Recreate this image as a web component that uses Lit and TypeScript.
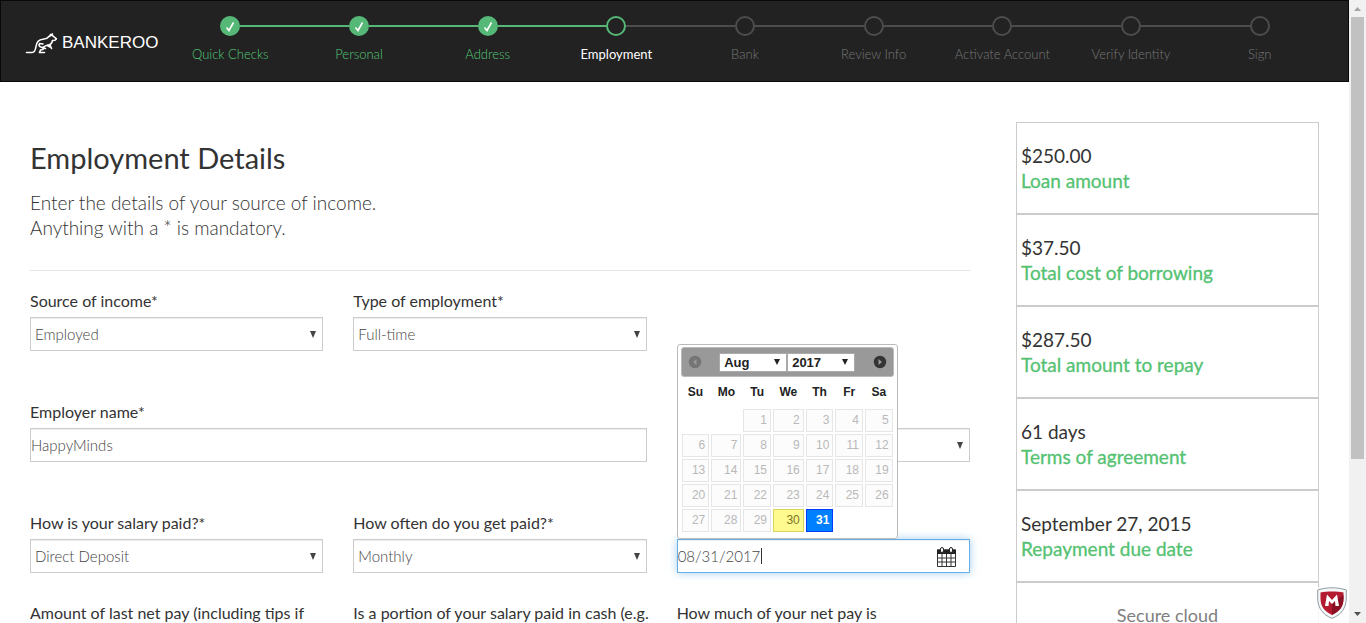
import { LitElement, html, css, svg } from "lit";
import { customElement, property, state } from "lit/decorators.js";
import { classMap } from "lit/directives/class-map.js";

const STEPS = [
  "Quick Checks",
  "Personal",
  "Address",
  "Employment",
  "Bank",
  "Review Info",
  "Activate Account",
  "Verify Identity",
  "Sign",
];

const SUMMARY = [
  ["$250.00", "Loan amount"],
  ["$37.50", "Total cost of borrowing"],
  ["$287.50", "Total amount to repay"],
  ["61 days", "Terms of agreement"],
  ["September 27, 2015", "Repayment due date"],
];

@customElement("step-header")
class StepHeader extends LitElement {
  @property({ type: Number }) current = 0;

  static styles = css`
    :host {
      display: block;
    }
    .bar {
      display: flex;
      align-items: flex-start;
      box-sizing: border-box;
      height: 82px;
      padding: 0 24px;
      background: #222;
      border: 1px solid #080808;
    }
    .brand {
      display: flex;
      align-items: center;
      gap: 5px;
      flex: 0 0 141px;
      margin-top: 30px;
      color: #fff;
      font: 17px/24px "Liberation Sans", Arial, sans-serif;
      text-decoration: none;
    }
    .brand svg {
      flex: none;
    }
    .steps {
      display: grid;
      grid-template-columns: repeat(9, 1fr);
      flex: 1;
      margin: 15px 0 0;
      padding: 0;
      list-style: none;
    }
    .step {
      display: flex;
      flex-direction: column;
      gap: 8px;
      color: #777;
      font-weight: 300;
      font-size: 13px;
      line-height: 20px;
      text-align: center;
    }
    .track {
      display: flex;
      align-items: center;
    }
    .line {
      flex: 1;
      height: 2px;
      background: #4d4d4d;
    }
    .dot {
      box-sizing: border-box;
      width: 20px;
      height: 20px;
      border: 2px solid #4d4d4d;
      border-radius: 50%;
    }
    .dot svg {
      display: block;
    }
    .done {
      color: #52c878;
    }
    .now {
      color: #fff;
      font-weight: 400;
    }
    .line.on {
      background: #56b877;
    }
    .line.none {
      background: none;
    }
    .done .dot {
      background: #56b877;
      border-color: #56b877;
    }
    .now .dot {
      border-color: #56b877;
    }
  `;

  render() {
    return html`<header class="bar">
      <a class="brand" href="#">
        <svg width="32" height="21" viewBox="0 0 32 21" fill="none" stroke="#fff" stroke-width="1.6" stroke-linecap="round" stroke-linejoin="round">
          <path d="M1.500 19.500H7C10 19.500 10.500 17 11 13.500C11.600 8.500 14 6.500 18 6.200C21 6 22.500 5.500 24 3.500L27.500 1"/>
          <path d="M25.500 1.500L28 3L31.500 6L30 7.200L27.500 7.500C27 10 26 11.500 23.500 12C21.500 12.500 19 13 18 15L20.500 15.500"/>
          <path d="M14.500 10.500L18 11M14 11.500C14 14 16 14.500 18.500 14.500C20 15.500 18 16.500 15.500 17L14.500 19.500H19.500M25 12L26.500 15.500M22.500 12.500L25 14"/>
        </svg>
        BANKEROO
      </a>
      <ol class="steps">
        ${STEPS.map((label, i) => {
          const done = i < this.current;
          const now = i === this.current;
          return html`<li class=${classMap({ step: true, done, now })}>
            <span class="track">
              <span class=${classMap({ line: true, none: i === 0, on: done || now })}></span>
              <span class="dot">
                ${done
                  ? html`<svg width="16" height="16" viewBox="0 0 16 16" fill="none" stroke="#fff" stroke-width="1.6"><path d="M4.500 9.500L7 12.500L11.500 4.500" /></svg>`
                  : ""}
              </span>
              <span class=${classMap({ line: true, on: done, none: i === STEPS.length - 1 })}></span>
            </span>
            <span>${label}</span>
          </li>`;
        })}
      </ol>
    </header>`;
  }
}

@customElement("date-picker")
class DatePicker extends LitElement {
  @state() private today = 30;
  @state() private selected = 31;

  static styles = css`
    :host {
      display: block;
      box-sizing: border-box;
      width: 221px;
      padding: 2px 3px 5px;
      background: #fff;
      border: 1px solid #bbb;
      border-radius: 3px;
      color: #222;
      font: 12px/15px "Liberation Sans", Arial, sans-serif;
    }
    .head {
      display: flex;
      align-items: center;
      justify-content: space-between;
      box-sizing: border-box;
      height: 30px;
      padding: 0 6px;
      background: #999;
      border: 1px solid #bbb;
      border-radius: 3px;
    }
    .nav {
      display: flex;
      padding: 0;
      background: none;
      border: 0;
    }
    .nav:disabled {
      opacity: 0.35;
    }
    .pickers {
      display: flex;
    }
    .pick {
      appearance: none;
      box-sizing: border-box;
      width: 68px;
      height: 19px;
      padding: 0 4px;
      border: 1px solid #aaa;
      border-radius: 0;
      background: #fff
        url("data:image/svg+xml,%3Csvg xmlns='http://www.w3.org/2000/svg' width='6' height='6'%3E%3Cpath d='M0 0h6L3 6z' fill='%23222'/%3E%3C/svg%3E")
        no-repeat right 6px center;
      color: #222;
      font: bold 13px/15px "Liberation Sans", Arial, sans-serif;
    }
    .days {
      width: 100%;
      border-collapse: collapse;
    }
    .days th {
      height: 15px;
      padding: 8px 4px;
      font-weight: bold;
    }
    .days td {
      padding: 1px;
    }
    .day {
      display: block;
      box-sizing: border-box;
      width: 100%;
      height: 23px;
      padding: 0 3px;
      background: #fcfcfc;
      border: 1px solid #e6e6e6;
      color: #b9b9b9;
      font: 12px/15px "Liberation Sans", Arial, sans-serif;
      text-align: right;
    }
    .today {
      background: #fffa90;
      border-color: #dad55e;
      color: #777620;
    }
    .selected {
      background: #007fff;
      border-color: #003eff;
      color: #fff;
      font-weight: bold;
    }
  `;

  private arrow(d: string) {
    return html`<svg width="14" height="14" viewBox="0 0 14 14"><circle cx="7" cy="7" r="6.200" fill="#333" />${svg`<path d=${d} fill="#999" />`}</svg>`;
  }

  render() {
    const weeks = [0, 1, 2, 3, 4].map((w) => [0, 1, 2, 3, 4, 5, 6].map((d) => w * 7 + d - 1));
    return html`
      <div class="head">
        <button class="nav" aria-label="Previous month" disabled>${this.arrow("M8.500 4V10L5 7Z")}</button>
        <div class="pickers">
          <select class="pick" aria-label="Month"><option>Aug</option></select>
          <select class="pick" aria-label="Year"><option>2017</option></select>
        </div>
        <button class="nav" aria-label="Next month">${this.arrow("M5.500 4V10L9 7Z")}</button>
      </div>
      <table class="days">
        <thead>
          <tr>${["Su", "Mo", "Tu", "We", "Th", "Fr", "Sa"].map((d) => html`<th>${d}</th>`)}</tr>
        </thead>
        <tbody>
          ${weeks.map(
            (week) => html`<tr>
              ${week.map((n) =>
                n < 1 || n > 31
                  ? html`<td></td>`
                  : html`<td>
                      <button
                        class=${classMap({ day: true, today: n === this.today, selected: n === this.selected })}
                        ?disabled=${n < this.today}
                        @click=${() => (this.selected = n)}
                      >${n}</button>
                    </td>`
              )}
            </tr>`
          )}
        </tbody>
      </table>
    `;
  }
}

@customElement("app-root")
class AppRoot extends LitElement {
  static styles = css`
    :host {
      display: grid;
      grid-template-columns: minmax(0, 1fr) 17px;
      height: 100vh;
      overflow: hidden;
      background: #fff;
      color: #333;
      font-family: Lato, "Open Sans", sans-serif;
    }
    .page {
      min-width: 0;
      height: 100vh;
      overflow: hidden;
    }
    .content {
      display: grid;
      grid-template-columns: minmax(0, 1fr) 303px;
      gap: 46px;
      align-items: start;
      padding: 40px 30px 0;
    }
    .title {
      margin: 16px 0 12px;
      font-size: 29px;
      font-weight: 400;
      line-height: 40px;
    }
    .intro {
      margin: 0 0 30px;
      font-size: 19px;
      font-weight: 300;
      line-height: 25px;
    }
    .form {
      display: grid;
      grid-template-columns: repeat(3, minmax(0, 1fr));
      gap: 49px 30px;
      padding-top: 18px;
      border-top: 1px solid #e5e5e5;
    }
    .form.more {
      padding-top: 28px;
      border-top: 0;
    }
    .field {
      display: flex;
      flex-direction: column;
      justify-content: flex-end;
      gap: 4px;
    }
    .field.wide {
      grid-column: span 2;
    }
    .label {
      font-size: 16px;
      line-height: 24px;
      white-space: nowrap;
    }
    .control {
      appearance: none;
      box-sizing: border-box;
      width: 100%;
      height: 34px;
      padding: 0;
      background: #fff;
      border: 1px solid #ccc;
      border-radius: 0;
      box-shadow: inset 0 1px 1px rgba(0, 0, 0, 0.075);
      color: #444;
      font: 300 15px/20px Lato, "Open Sans", sans-serif;
    }
    .select {
      padding: 0 4px;
      background: #fff
        url("data:image/svg+xml,%3Csvg xmlns='http://www.w3.org/2000/svg' width='6' height='7'%3E%3Cpath d='M0 0h6L3 7z' fill='%23444'/%3E%3C/svg%3E")
        no-repeat right 6px center;
    }
    .dated {
      position: relative;
    }
    .active {
      background: linear-gradient(#333, #333) 83px 8px / 1px 16px no-repeat #fff;
      border-color: #66afe9;
      box-shadow: inset 0 1px 1px rgba(0, 0, 0, 0.075), 0 0 8px rgba(102, 175, 233, 0.6);
    }
    .calendar {
      position: absolute;
      top: 8px;
      right: 14px;
      display: flex;
      padding: 0;
      background: none;
      border: 0;
    }
    .popup {
      position: absolute;
      left: 0;
      bottom: 100%;
      z-index: 2;
    }
    .summary {
      margin: 0;
    }
    .item {
      padding: 20px 4px;
      border: 1px solid #ccc;
      font-size: 19px;
      line-height: 25px;
    }
    .item dd {
      margin: 0;
    }
    .name {
      color: #54c272;
      -webkit-text-stroke: 0.3px #54c272;
    }
    .secure {
      color: #808080;
      font-size: 18px;
      text-align: center;
    }
    .badge {
      position: fixed;
      right: 18px;
      bottom: 0;
      display: flex;
      padding: 0 1px 4px 0;
      background: rgba(255, 255, 255, 0.8);
      border: 0;
    }
    .scroll {
      display: flex;
      flex-direction: column;
      align-items: center;
      justify-content: space-between;
      box-sizing: border-box;
      height: 100vh;
      background: #f1f1f1;
    }
    .arrow {
      display: block;
      height: 17px;
    }
    .rail {
      flex: 1;
      width: 13px;
    }
    .thumb {
      height: 75%;
      background: #c1c1c1;
    }
  `;

  private choice(id: string, label: string, value: string) {
    return html`<div class="field">
      <label class="label" for=${id}>${label}</label>
      <select class="control select" id=${id}><option>${value}</option></select>
    </div>`;
  }

  private text(id: string, label: string, value: string, wide = false) {
    return html`<div class=${classMap({ field: true, wide })}>
      <label class="label" for=${id}>${label}</label>
      <input class="control" id=${id} .value=${value} />
    </div>`;
  }

  render() {
    return html`
      <div class="page">
        <step-header .current=${3}></step-header>
        <div class="content">
          <main>
            <h1 class="title">Employment Details</h1>
            <p class="intro">Enter the details of your source of income.<br />Anything with a * is mandatory.</p>
            <form>
              <div class="form">
                ${this.choice("source", "Source of income*", "Employed")}
                ${this.choice("type", "Type of employment*", "Full-time")}
                <span></span>
                ${this.text("employer", "Employer name*", "HappyMinds", true)}
                <div class="field">
                  <select class="control select" aria-label="Time employed"><option></option></select>
                </div>
                ${this.choice("paid", "How is your salary paid?*", "Direct Deposit")}
                ${this.choice("often", "How often do you get paid?*", "Monthly")}
                <div class="field">
                  <div class="dated">
                    <input class="control active" aria-label="Next pay date" .value=${"08/31/2017"} />
                    <button class="calendar" type="button" aria-label="Choose a date">
                      <svg width="19" height="20" viewBox="0 0 19 20">
                        <path d="M0.500 3H18.500V19.500H0.500Z" fill="#fff" stroke="#333" />
                        <path d="M0 2.500H19V7H0Z" fill="#222" />
                        <path d="M1 11H18M1 15H18M5 7V19M9.500 7V19M14 7V19" stroke="#333" fill="none" />
                        <rect x="3.500" y="0.500" width="3" height="5" rx="1.500" fill="#fff" stroke="#222" />
                        <rect x="12.500" y="0.500" width="3" height="5" rx="1.500" fill="#fff" stroke="#222" />
                      </svg>
                    </button>
                    <date-picker class="popup"></date-picker>
                  </div>
                </div>
              </div>
              <div class="form more">
                ${this.text("net", "Amount of last net pay (including tips if", "")}
                ${this.text("cash", "Is a portion of your salary paid in cash (e.g.", "")}
                ${this.text("share", "How much of your net pay is", "")}
              </div>
            </form>
          </main>
          <aside>
            <dl class="summary">
              ${SUMMARY.map(
                ([value, name]) => html`<div class="item">
                  <dd>${value}</dd>
                  <dt class="name">${name}</dt>
                </div>`
              )}
            </dl>
            <div class="item secure">Secure cloud</div>
          </aside>
        </div>
      </div>
      <button class="badge" aria-label="McAfee Secure">
        <svg width="30" height="32" viewBox="0 0 30 32">
          <path d="M15 0.800C19.500 0.800 25 1.500 29.300 3V11C29.300 21 24 28 15 31.300C6 28 0.700 21 0.700 11V3C5 1.500 10.500 0.800 15 0.800Z" fill="#f4f6f7" stroke="#8f9ca3" />
          <path d="M15 4.500C19 4.500 23 4.800 26.500 5.600V11.500C26.500 19.500 22.500 24.500 15 28C7.500 24.500 3.500 19.500 3.500 11.500V5.600C7 4.800 11 4.500 15 4.500Z" fill="#b3192f" />
          <path d="M15 16V28C22.500 24.500 26.500 19.500 26.500 11.500V8Z" fill="#8c1023" />
          <path d="M8 19L10 7.500L15 13L20 7.500L22 19H18.500L18 14L15 17L12 14L11.500 19Z" fill="#fff" />
        </svg>
      </button>
      <div class="scroll">
        <svg class="arrow" width="17" height="17"><path d="M5 11L8.500 7L12 11Z" fill="#a3a3a3" /></svg>
        <div class="rail"><div class="thumb"></div></div>
        <svg class="arrow" width="17" height="17"><path d="M5 6L8.500 10L12 6Z" fill="#505050" /></svg>
      </div>
    `;
  }
}
